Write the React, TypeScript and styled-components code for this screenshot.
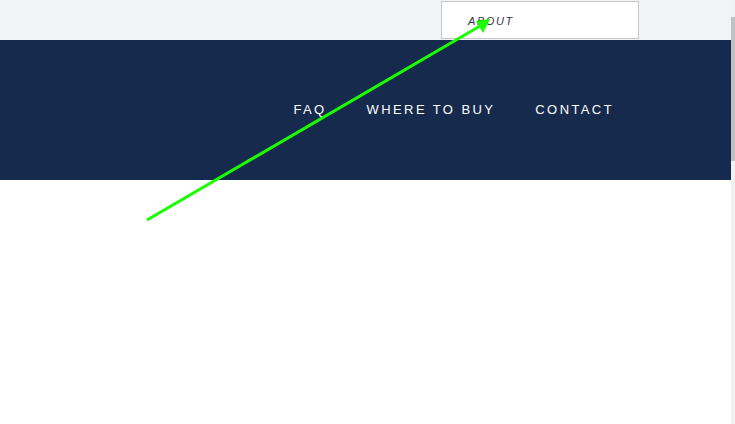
import styled, { createGlobalStyle } from "styled-components";

const GlobalStyle = createGlobalStyle`
    html, body {
        margin: 0;
        padding: 0;
        overflow: hidden;
        background: #ffffff;
    }
`;

const Page = styled.div`
    position: relative;
    display: flex;
    width: 735px;
    height: 424px;
    font-family: "Liberation Sans", Arial, sans-serif;
`;

const Main = styled.div`
    flex: 1;
    display: flex;
    flex-direction: column;
`;

const TopStrip = styled.div`
    height: 40px;
    background-color: #f2f3f5;
    display: flex;
    justify-content: flex-end;
    align-items: flex-start;
    padding-right: 92px;
`;

const MenuBox = styled.div`
    box-sizing: border-box;
    width: 198px;
    height: 38px;
    margin-top: 1px;
    border: 1px solid #c8c8c8;
    background-color: #ffffff;
    display: flex;
    align-items: center;
    padding-left: 26px;
    padding-top: 2px;
`;

const MenuItem = styled.span`
    font-size: 11px;
    font-style: italic;
    letter-spacing: 1.6px;
    color: #2f3440;
`;

const Header = styled.header`
    height: 140px;
    background-color: #152a4c;
    display: flex;
    justify-content: flex-end;
    align-items: center;
    padding-right: 117px;
`;

const Nav = styled.nav`
    display: flex;
    gap: 40px;
    margin-top: -2px;
`;

const NavLink = styled.a`
    font-size: 13px;
    letter-spacing: 2.4px;
    color: #ffffff;
    text-decoration: none;
`;

const Body = styled.div`
    flex: 1;
    background-color: #ffffff;
`;

const Scrollbar = styled.div`
    width: 4px;
    background-color: #f1f1f1;
    padding-top: 17px;
`;

const Thumb = styled.div`
    height: 144px;
    background-color: #c1c1c1;
`;

const Overlay = styled.svg`
    position: absolute;
    left: 0;
    top: 0;
    pointer-events: none;
`;

export default function App() {
    return (
        <>
            <GlobalStyle />
            <Page>
                <Main>
                    <TopStrip>
                        <MenuBox>
                            <MenuItem>ABOUT</MenuItem>
                        </MenuBox>
                    </TopStrip>
                    <Header>
                        <Nav>
                            <NavLink>FAQ</NavLink>
                            <NavLink>WHERE TO BUY</NavLink>
                            <NavLink>CONTACT</NavLink>
                        </Nav>
                    </Header>
                    <Body />
                </Main>
                <Scrollbar>
                    <Thumb />
                </Scrollbar>
                {/* annotation arrow */}
                <Overlay width="735" height="424" viewBox="0 0 735 424">
                    <line x1="147" y1="220" x2="480" y2="26" stroke="#1aff00" strokeWidth="3" />
                    <polygon points="490,19 476,21 483,33" fill="#1aff00" />
                </Overlay>
            </Page>
        </>
    );
}
